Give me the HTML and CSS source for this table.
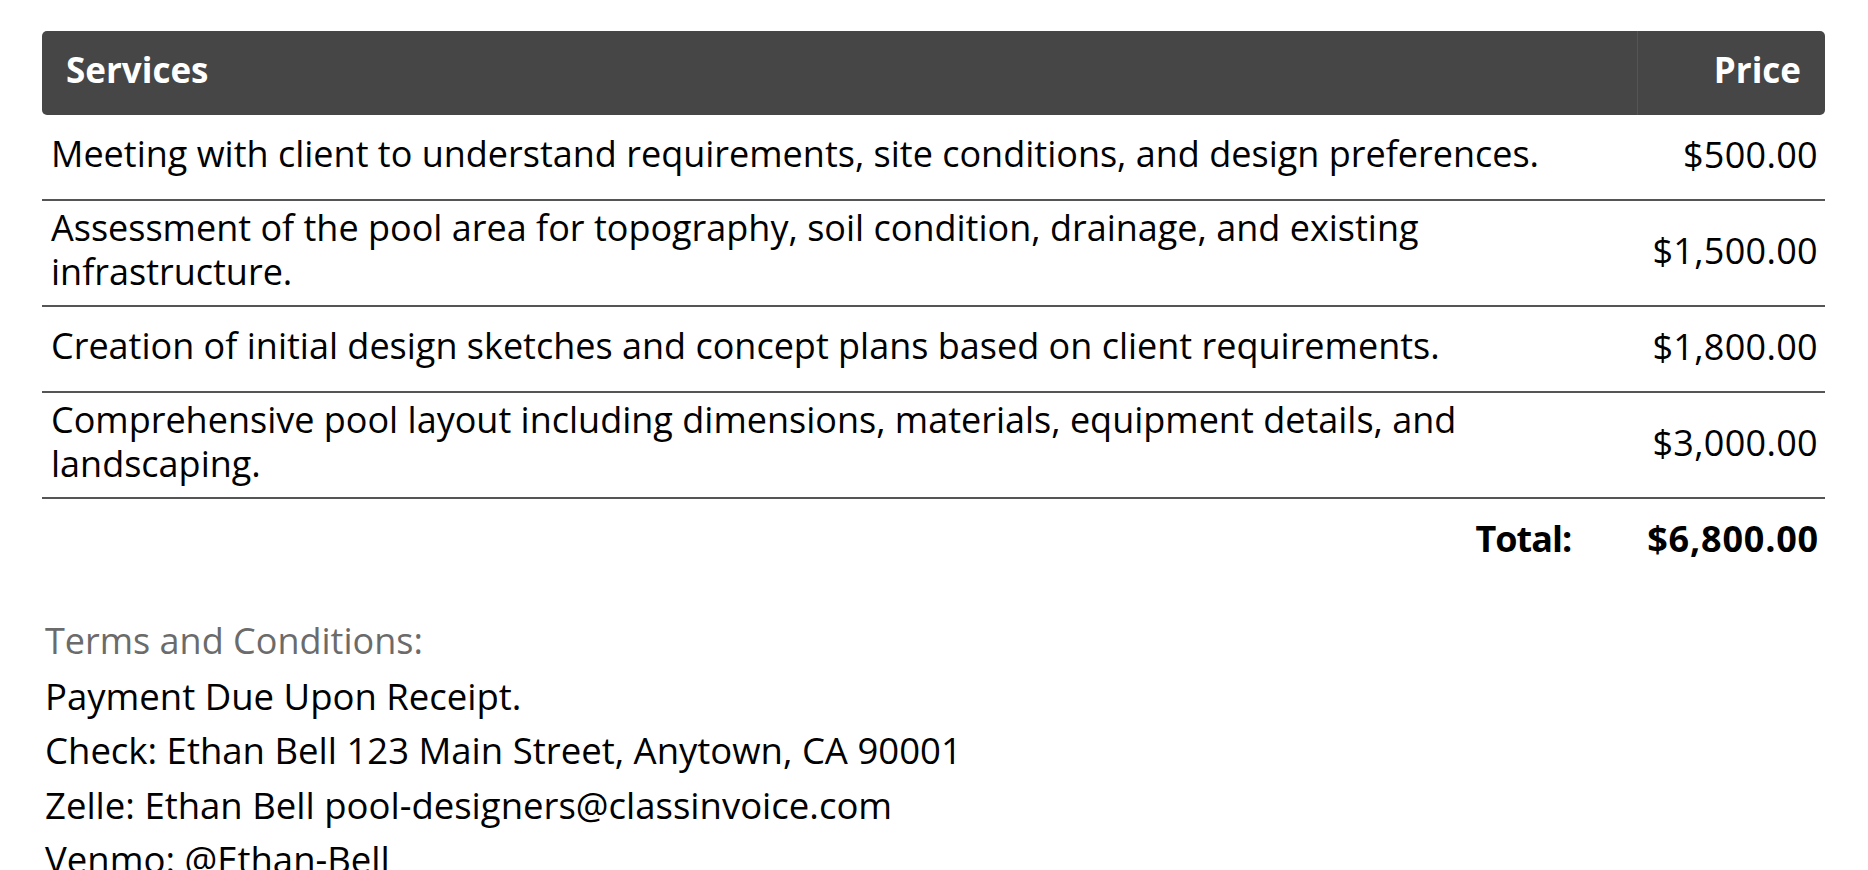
FILE: index.html
```html
<!DOCTYPE html>
<html lang="en">
<head>
<meta charset="utf-8">
<title>Invoice</title>
<link rel="stylesheet" href="styles.css">
</head>
<body>
<div class="invoice">
  <table class="items">
    <thead>
      <tr>
        <th class="col-svc">Services</th>
        <th class="col-price">Price</th>
      </tr>
    </thead>
    <tbody>
      <tr>
        <td class="desc">Meeting with client to understand requirements, site conditions, and design preferences.</td>
        <td class="amt">$500.00</td>
      </tr>
      <tr>
        <td class="desc">Assessment of the pool area for topography, soil condition, drainage, and existing infrastructure.</td>
        <td class="amt">$1,500.00</td>
      </tr>
      <tr>
        <td class="desc">Creation of initial design sketches and concept plans based on client requirements.</td>
        <td class="amt">$1,800.00</td>
      </tr>
      <tr>
        <td class="desc">Comprehensive pool layout including dimensions, materials, equipment details, and landscaping.</td>
        <td class="amt">$3,000.00</td>
      </tr>
    </tbody>
  </table>
  <div class="total">
    <span class="total-label">Total:</span>
    <span class="total-value">$6,800.00</span>
  </div>
  <div class="terms">
    <p class="terms-title">Terms and Conditions:</p>
    <p>Payment Due Upon Receipt.</p>
    <p>Check: Ethan Bell 123 Main Street, Anytown, CA 90001</p>
    <p>Zelle: Ethan Bell pool-designers@classinvoice.com</p>
    <p>Venmo: @Ethan-Bell</p>
  </div>
</div>
</body>
</html>
```
FILE: styles.css
```css
* { box-sizing: border-box; }
html, body { margin: 0; padding: 0; background: #fff; }
body {
  font-family: "Open Sans", "Noto Sans", sans-serif;
  color: #000;
  overflow: hidden;
}
.invoice {
  padding: 31px 43px 0 42px;
}
.items {
  width: 100%;
  border-collapse: separate;
  border-spacing: 0;
  table-layout: fixed;
}
.items th {
  background: #464646;
  color: #fff;
  font-weight: 700;
  font-size: 35px;
  height: 84px;
  padding: 0 24px 7px;
}
.col-svc {
  text-align: left;
  border-radius: 5px 0 0 5px;
  border-right: 1px solid #555;
}
.col-price {
  width: 187px;
  text-align: right;
  border-radius: 0 5px 5px 0;
}
.items td {
  border-bottom: 2px solid #555;
  font-size: 36px;
  font-weight: 500;
  line-height: 44px;
  vertical-align: middle;
}
.desc {
  padding: 5px 9px 11px;
}
.amt {
  padding: 18px 7px 22px 0;
  text-align: right;
  letter-spacing: 0.3px;
}
.total {
  display: flex;
  justify-content: flex-end;
  align-items: center;
  font-size: 36px;
  font-weight: 700;
  line-height: 44px;
  padding-top: 18px;
}
.total-label {
  margin-right: 76px;
  letter-spacing: -1px;
}
.total-value {
  padding-right: 6px;
  letter-spacing: 0.8px;
}
.terms {
  margin-top: 53px;
  padding-left: 3px;
  font-size: 36.5px;
  font-weight: 500;
  line-height: 54.5px;
}
.terms p { margin: 0; }
.terms-title {
  color: #6b6b6b;
  font-weight: 400;
  font-size: 36px;
}
```
